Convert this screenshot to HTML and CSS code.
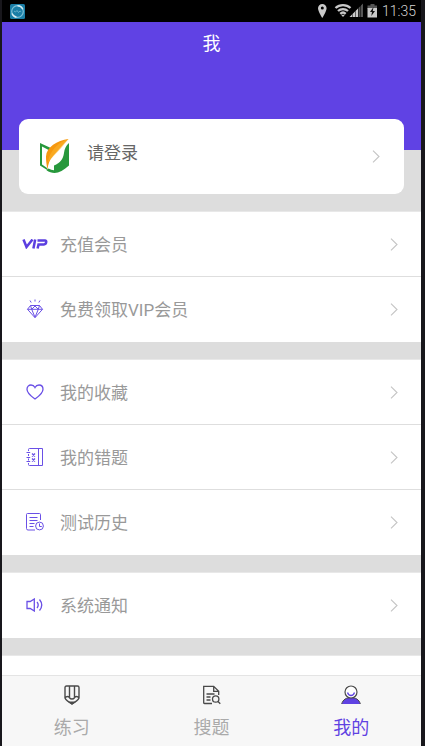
FILE: index.html
```html
<!DOCTYPE html>
<html lang="zh-CN">
<head>
<meta charset="utf-8">
<meta name="viewport" content="width=device-width, initial-scale=1">
<title>我</title>
<link rel="stylesheet" href="styles.css">
</head>
<body>
<div class="screen">
  <div class="status">
    <svg class="status-app" width="15" height="15" viewBox="0 0 15 15" aria-hidden="true">
      <rect width="15" height="15" rx="1.5" fill="#1a7ea6"/>
      <circle cx="7.5" cy="7.5" r="5.8" fill="none" stroke="#7fc0d6" stroke-width="1.2"/>
      <path d="M7.5 1.7a5.8 5.8 0 0 1 5.3 3.6M2 9.5a5.8 5.8 0 0 0 4.5 3.7" fill="none" stroke="#d8ecf2" stroke-width="1.4"/>
      <path d="M4 7l1.500 1L7 6.500l1.500 2L10 7l1.200.8" fill="none" stroke="#6fb4cc" stroke-width=".9"/>
    </svg>
    <svg width="60" height="16" viewBox="0 0 60 16" aria-hidden="true">
      <path d="M4.300 1a4.300 4.300 0 0 0-4.300 4.300C0 8.500 4.300 15 4.300 15S8.600 8.500 8.600 5.300A4.300 4.300 0 0 0 4.300 1z" fill="#c9c9c9"/>
      <circle cx="4.300" cy="5" r="1.500" fill="#000"/>
      <g fill="none" stroke="#c9c9c9" stroke-width="2.300">
        <path d="M17.500 5a11 11 0 0 1 15 0"/>
        <path d="M20 8a7.500 7.500 0 0 1 10 0"/>
        <path d="M22.300 10.800a4 4 0 0 1 5.400 0"/>
      </g>
      <path d="M23 11.700h4L25 14z" fill="#c9c9c9"/>
      <path d="M31.500 14H34v-2.500zM34.500 14H37V8.500L34.500 11zM37.500 14H40V5.500L37.500 8z" fill="#c9c9c9"/>
      <path d="M40.500 14h2V3l-2 2zM43 14h2V.5l-2 2z" fill="#555"/>
      <path d="M49.500 2.500h3V1h4v1.500H59V6h-9.500z" fill="#555"/>
      <path d="M49.500 5H59v9.500h-9.500z" fill="#c9c9c9"/>
      <path d="M55.500 4l-3.500 5h2l-.7 4 3.700-5h-2.200z" fill="#111"/>
    </svg>
    <time class="clock">11:35</time>
  </div>

  <header class="hero"><h1>我</h1></header>

  <main class="content">
    <a class="login" href="#login">
      <svg width="30" height="35" viewBox="0 0 30 35" aria-hidden="true">
        <path d="M0 4l13 6-1.500 2.500L2 7.500v18l5 3.500 1 2.500-8-5z" fill="#27983c"/>
        <path d="M29 4v22.500C24 31 19 34 14.500 34c-2.700 0-5.500-1-8-2.800l2-1.800c1.800 1 3.600 1.600 5.500 1.900v-4.800c6.500-2.500 9-6.500 10-12.500.5-4 2-7.500 5-10z" fill="#27983c"/>
        <path d="M28.500 0C17 1.500 6.500 8 6 17.500c-.1 4 .5 8 1.500 13C8 25 9.500 21 13 17c6-6.500 10-12 15.500-17z" fill="#f6980f"/>
        <path d="M28.500 0C19 3 10.500 10 7.500 24 13 17 21 10 28.500 0z" fill="#fbb42c" opacity=".6"/>
      </svg>
      <span class="login-label">请登录</span>
      <svg class="arrow" width="8" height="13" viewBox="0 0 8 13" aria-hidden="true"><path d="M1 .7l6 5.800-6 5.800"/></svg>
    </a>

    <nav class="group">
      <a class="row" href="#recharge">
        <span class="icon"><svg width="26" height="10" viewBox="0 0 26 10" aria-hidden="true">
          <g fill="none" stroke="#5b3fe0" stroke-width="2.500"><path d="M1.500.5L4.500 8l6-7.500M13.200.5l-1.800 9M15.500 1.500h7.500q1.500 0 1.200 1.700-.3 2.200-2.200 2.200h-5.500l-.9 4.100"/></g>
        </svg></span>
        <span class="label">充值会员</span>
        <svg class="arrow" width="8" height="13" viewBox="0 0 8 13" aria-hidden="true"><path d="M1 .7l6 5.800-6 5.800"/></svg>
      </a>
      <a class="row" href="#free-vip">
        <span class="icon"><svg class="line" width="18" height="20" viewBox="0 0 18 20" aria-hidden="true">
          <path d="M4.500 6.500h9l3 3.800L9 18.700 1.500 10.300zM1.500 10.300h15M5.700 10.300L9 18.300l3.300-8L9 7zM4.500 6.500l1.200 3.800M13.500 6.500l-1.200 3.800M9 .5v2M4 1.500l1.200 2M14 1.500l-1.200 2"/>
        </svg></span>
        <span class="label">免费领取VIP会员</span>
        <svg class="arrow" width="8" height="13" viewBox="0 0 8 13" aria-hidden="true"><path d="M1 .7l6 5.800-6 5.800"/></svg>
      </a>
    </nav>

    <nav class="group">
      <a class="row" href="#favorites">
        <span class="icon"><svg class="line bold" width="18" height="16" viewBox="0 0 18 16" aria-hidden="true">
          <path d="M9 15C6 12.800 1 9.500 1 5.200 1 2.700 2.800 1 5 1c1.800 0 3.200 1 4 2.500C9.800 2 11.200 1 13 1c2.200 0 4 1.700 4 4.200C17 9.500 12 12.800 9 15z"/>
        </svg></span>
        <span class="label">我的收藏</span>
        <svg class="arrow" width="8" height="13" viewBox="0 0 8 13" aria-hidden="true"><path d="M1 .7l6 5.800-6 5.800"/></svg>
      </a>
      <a class="row" href="#mistakes">
        <span class="icon"><svg class="line" width="18" height="18" viewBox="0 0 18 18" aria-hidden="true">
          <path d="M2.500 3V1.500q0-1 1-1h13v17h-13q-1 0-1-1V15M2.500 6v2M2.500 10.500v2M12.500.5v17M.5 4.500h3.700M.5 9.500h3.700M.5 13.500h3.700"/>
          <path class="cross" d="M6 5.500l3 3M9 5.500l-3 3M6 10.500l3 3M9 10.500l-3 3"/>
        </svg></span>
        <span class="label">我的错题</span>
        <svg class="arrow" width="8" height="13" viewBox="0 0 8 13" aria-hidden="true"><path d="M1 .7l6 5.800-6 5.800"/></svg>
      </a>
      <a class="row" href="#history">
        <span class="icon"><svg class="line" width="18" height="18" viewBox="0 0 18 18" aria-hidden="true">
          <path d="M14.500 7V1.500q0-1-1-1h-12q-1 0-1 1v14q0 1.500 1.500 1.500h7M3.500 4.500h8M3.500 7.500h8M3.500 10.500h5M3.500 13.500h4"/>
          <circle cx="13.500" cy="13" r="3.900"/><path d="M13.500 10.500v3h2.300"/>
        </svg></span>
        <span class="label">测试历史</span>
        <svg class="arrow" width="8" height="13" viewBox="0 0 8 13" aria-hidden="true"><path d="M1 .7l6 5.800-6 5.800"/></svg>
      </a>
    </nav>

    <nav class="group">
      <a class="row" href="#notices">
        <span class="icon"><svg class="line bold" width="18" height="14" viewBox="0 0 18 14" aria-hidden="true">
          <path d="M1 3.500h3.200L8.300 1v12l-4.100-2.500H1zM11 4q2.400 3 0 6M13.500 1.500q4.500 5.500 0 11"/>
        </svg></span>
        <span class="label">系统通知</span>
        <svg class="arrow" width="8" height="13" viewBox="0 0 8 13" aria-hidden="true"><path d="M1 .7l6 5.800-6 5.800"/></svg>
      </a>
    </nav>

    <div class="group rest"></div>
  </main>

  <nav class="tabs">
    <a class="tab" href="#practice">
      <svg width="20" height="20" viewBox="0 0 20 20" fill="none" stroke="#4a4a4a" stroke-width="1.400" aria-hidden="true">
        <path d="M3 2.500q0-1.500 1.500-1.500h11q1.500 0 1.500 1.500V13q-1 2.500-7 6-6-3.500-7-6zM7.500 1v11M12.500 1v11M3 13q1-1.500 2.500-1.500t2 1.200q1 1.300 2.500 1.300t2.500-1.300q.5-1.200 2-1.200t2.500 1.500"/>
        <path d="M7.500 17.200h5L10 19z" fill="#4a4a4a"/>
      </svg>
      <span>练习</span>
    </a>
    <a class="tab" href="#search">
      <svg width="20" height="20" viewBox="0 0 20 20" fill="none" stroke="#4a4a4a" stroke-width="1.300" aria-hidden="true">
        <path d="M10 18.500H2.500q-.8 0-.8-.8V1.300h10l5 5V10M11.700 1.300v5h5M4.500 9h8M4.500 12h4M4.500 15h4"/>
        <circle cx="13.700" cy="14" r="3.200"/><path d="M16 16.500l2.300 2.300"/>
      </svg>
      <span>搜题</span>
    </a>
    <a class="tab active" href="#me" aria-current="page">
      <svg width="20" height="20" viewBox="0 0 20 20" fill="none" aria-hidden="true">
        <path d="M.7 19c1-4.500 5-6.500 9.300-6.500s8.300 2 9.300 6.500z" fill="#5f42e2"/>
        <path d="M.7 19c1-4.500 5-6.500 9.300-6.500s8.300 2 9.300 6.500" stroke="#4a4a4a"/>
        <circle cx="10" cy="7" r="6" fill="#fff" stroke="#4a4a4a" stroke-width="1.200"/>
        <path d="M6.500 7.500q1 3 3.500 3t3.500-3" stroke="#5f42e2" stroke-width="1.300"/>
      </svg>
      <span>我的</span>
    </a>
  </nav>
</div>
</body>
</html>
```
FILE: styles.css
```css
* {
  box-sizing: border-box;
}

body {
  margin: 0;
  padding: 0 4px 0 2px;
  background: #18171c;
  font-family: Roboto, "Noto Sans CJK SC", sans-serif;
  font-size: 17px;
}

a {
  color: inherit;
  text-decoration: none;
}

svg {
  display: block;
  flex: none;
}

.screen {
  display: flex;
  flex-direction: column;
  height: 100vh;
  overflow: hidden;
  background: #ddd;
}

.status {
  display: flex;
  flex: none;
  align-items: center;
  height: 22px;
  padding: 0 5px 0 8px;
  background: #000;
}

.status-app {
  margin-right: auto;
}

.clock {
  margin-left: 4px;
  color: #d4d4d4;
  font: 300 14px/22px Roboto, sans-serif;
}

.hero {
  flex: none;
  height: 128px;
  background: #6042e4;
  color: #fff;
  text-align: center;
}

.hero h1 {
  margin: 0;
  font-size: 18px;
  font-weight: 400;
  line-height: 44px;
}

.content {
  flex: 1;
  display: flex;
  flex-direction: column;
  gap: 17px;
  min-height: 0;
}

.login {
  display: flex;
  flex: none;
  align-items: center;
  height: 75px;
  margin: -31px 17px 0;
  padding: 0 24px 0 21px;
  border-radius: 9px;
  background: #fff;
  color: #666;
}

.login-label {
  margin-left: 17px;
  padding-bottom: 10px;
}

.label {
  padding-bottom: 2px;
}

.arrow {
  margin-left: auto;
  fill: none;
  stroke: #c4c4c4;
  stroke-width: 1.1;
}

.group {
  flex: none;
  border-top: 1px solid #e8e8e8;
  background: #fff;
}

.row {
  display: flex;
  align-items: center;
  height: 65px;
  padding: 0 23px 0 20px;
  border-bottom: 1px solid #dedede;
  color: #999;
}

.row:last-child {
  border-bottom-color: #fff;
}

.icon {
  display: flex;
  justify-content: center;
  width: 26px;
  margin-right: 12px;
}

.line {
  fill: none;
  stroke: #6a50e6;
  stroke-width: 1;
}

.bold,
.cross {
  stroke-width: 1.3;
}

.rest {
  flex: 1;
}

.tabs {
  display: flex;
  flex: none;
  height: 71px;
  border-top: 1px solid #e4e4e4;
  background: #f7f7f7;
  color: #aaa;
  font-size: 18px;
}

.tab {
  display: flex;
  flex: 1;
  flex-direction: column;
  align-items: center;
  gap: 6px;
  padding-top: 9px;
  line-height: 34px;
}

.active {
  color: #5f42e2;
}
```
